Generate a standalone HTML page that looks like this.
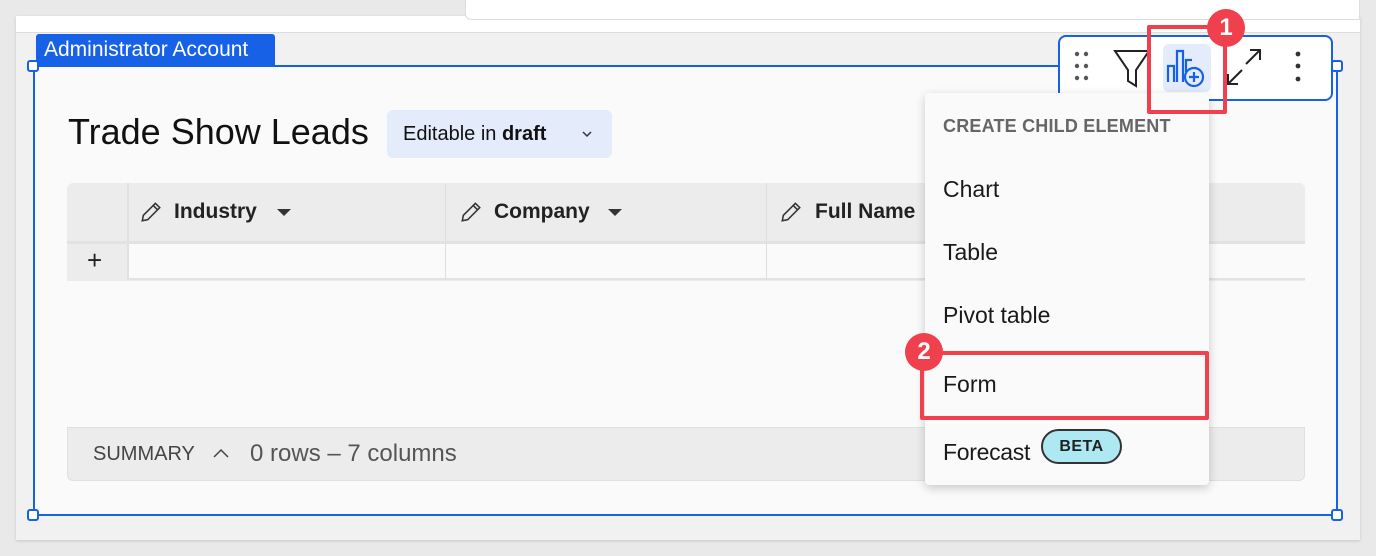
<!DOCTYPE html>
<html><head><meta charset="utf-8"><style>
*{box-sizing:border-box;margin:0;padding:0}
body{width:1376px;height:556px;background:#e9e9e9;font-family:"Liberation Sans",sans-serif;position:relative;overflow:hidden;color:#1a1a1a}
.a{position:absolute}
</style></head><body>
<div class="a" style="left:16px;top:16px;width:1344px;height:524px;background:#f1f1f1;box-shadow:0 1px 3px rgba(0,0,0,.15)"></div>
<div class="a" style="left:16px;top:16px;width:1344px;height:17px;background:#fff;border-bottom:1px solid #ddd"></div>
<div class="a" style="left:465px;top:0;width:895px;height:20px;border:1px solid #ddd;border-top:none;border-radius:0 0 0 6px;background:#fff"></div>
<!-- element -->
<div class="a" style="left:33px;top:65px;width:1305px;height:451px;background:#fafafa;border:2px solid #1761e6"></div>
<div class="a" style="left:36px;top:34px;width:239px;height:31px;background:#1761e6;border-radius:3px 3px 0 0;color:#fff;font-size:21px;line-height:31px;padding-left:8px">Administrator Account</div>
<div class="a" style="left:27px;top:60px;width:12px;height:12px;border:2px solid #1761e6;background:#fff;border-radius:3px"></div>
<div class="a" style="left:1331px;top:60px;width:12px;height:12px;border:2px solid #1761e6;background:#fff;border-radius:3px"></div>
<div class="a" style="left:27px;top:509px;width:12px;height:12px;border:2px solid #1761e6;background:#fff;border-radius:3px"></div>
<div class="a" style="left:1331px;top:509px;width:12px;height:12px;border:2px solid #1761e6;background:#fff;border-radius:3px"></div>
<div class="a" style="left:68px;top:111px;font-size:36px;color:#111">Trade Show Leads</div>
<div class="a" style="left:387px;top:110px;width:225px;height:48px;background:#e4ebfa;border-radius:6px;font-size:20px;line-height:48px;padding-left:16px;color:#111">Editable in <b>draft</b><svg style="position:absolute;left:194px;top:19px" width="12" height="10" viewBox="0 0 12 10"><path d="M2 3l4 4 4-4" fill="none" stroke="#333" stroke-width="1.5"/></svg></div>
<!-- table -->
<div class="a" style="left:67px;top:183px;width:1238px;height:98px;border-radius:6px 6px 0 0;background:#ececec;overflow:hidden">
<div class="a" style="left:60px;top:0;width:1178px;height:58px;background:#ececec;border-left:2px solid #e0e0e0"></div>
<div class="a" style="left:0;top:58px;width:1238px;height:3px;background:#e2e2e2"></div>
<div class="a" style="left:60px;top:61px;width:1178px;height:36px;background:#fafafa;border-left:2px solid #e0e0e0;border-bottom:2px solid #e2e2e2"></div>
<div class="a" style="left:378px;top:0;width:1px;height:97px;background:#dedede"></div>
<div class="a" style="left:699px;top:0;width:1px;height:97px;background:#dedede"></div>
<div class="a" style="left:20px;top:62px;font-size:26px;color:#222">+</div>
</div>
<svg class="a" style="left:139px;top:200px" width="24" height="24" viewBox="0 0 22 22"><path d="M3 19l1-5L15 3l4 4L8 18z M13 5l4 4" fill="none" stroke="#333" stroke-width="1.4"/></svg>
<div class="a" style="left:174px;top:200px;font-size:21px;font-weight:bold;color:#222">Industry</div>
<svg class="a" style="left:277px;top:209px" width="14" height="8"><path d="M0 0h14L7 7z" fill="#333"/></svg>
<svg class="a" style="left:459px;top:200px" width="24" height="24" viewBox="0 0 22 22"><path d="M3 19l1-5L15 3l4 4L8 18z M13 5l4 4" fill="none" stroke="#333" stroke-width="1.4"/></svg>
<div class="a" style="left:494px;top:200px;font-size:21px;font-weight:bold;color:#222">Company</div>
<svg class="a" style="left:608px;top:209px" width="14" height="8"><path d="M0 0h14L7 7z" fill="#333"/></svg>
<svg class="a" style="left:779px;top:200px" width="24" height="24" viewBox="0 0 22 22"><path d="M3 19l1-5L15 3l4 4L8 18z M13 5l4 4" fill="none" stroke="#333" stroke-width="1.4"/></svg>
<div class="a" style="left:815px;top:200px;font-size:21px;font-weight:bold;color:#222">Full Name</div>
<!-- summary -->
<div class="a" style="left:67px;top:427px;width:1238px;height:54px;background:#ececec;border:1px solid #e0e0e0;border-radius:0 0 6px 6px"></div>
<div class="a" style="left:93px;top:443px;font-size:20px;color:#444">SUMMARY</div>
<svg class="a" style="left:212px;top:447px" width="18" height="12"><path d="M2 10l7-7 7 7" fill="none" stroke="#444" stroke-width="1.5"/></svg>
<div class="a" style="left:250px;top:440px;font-size:24px;color:#555">0 rows – 7 columns</div>
<!-- toolbar -->
<div class="a" style="left:1058px;top:35px;width:275px;height:66px;background:#fff;border:2px solid #1761e6;border-radius:8px"></div>
<svg class="a" style="left:1072px;top:48px" width="20" height="36"><g fill="#555"><circle cx="5" cy="6" r="2.2"/><circle cx="14" cy="6" r="2.2"/><circle cx="5" cy="18" r="2.2"/><circle cx="14" cy="18" r="2.2"/><circle cx="5" cy="30" r="2.2"/><circle cx="14" cy="30" r="2.2"/></g></svg>
<svg class="a" style="left:1112px;top:48px" width="40" height="40"><path d="M3 3h34L24 22v16l-8-5V22z" fill="none" stroke="#222" stroke-width="2"/></svg>
<div class="a" style="left:1163px;top:44px;width:48px;height:48px;background:#e4ebfa;border-radius:6px"></div>
<svg class="a" style="left:1163px;top:44px" width="48" height="48"><g fill="none" stroke="#1761e6" stroke-width="2.2"><path d="M5 38V22h6v16 M14 38V7h6v31 M23 28V16h6"/><circle cx="31" cy="33" r="9" fill="#e4ebfa"/><path d="M31 28v10M26 33h10"/></g></svg>
<svg class="a" style="left:1226px;top:48px" width="36" height="38"><g fill="none" stroke="#222" stroke-width="2"><path d="M20 16L34 2M24 2h10v10 M16 22L2 36M2 26v10h10"/></g></svg>
<svg class="a" style="left:1290px;top:48px" width="16" height="36"><g fill="#333"><circle cx="8" cy="6" r="2.4"/><circle cx="8" cy="18" r="2.4"/><circle cx="8" cy="31" r="2.4"/></g></svg>
<!-- menu -->
<div class="a" style="left:925px;top:93px;width:284px;height:392px;background:#fafafa;border-radius:4px;box-shadow:0 3px 10px rgba(0,0,0,.2)"></div>
<div class="a" style="left:943px;top:116px;font-size:18px;font-weight:bold;color:#666;letter-spacing:0.2px">CREATE CHILD ELEMENT</div>
<div class="a" style="left:943px;top:176px;font-size:23px;color:#1a1a1a">Chart</div>
<div class="a" style="left:943px;top:239px;font-size:23px;color:#1a1a1a">Table</div>
<div class="a" style="left:943px;top:302px;font-size:23px;color:#1a1a1a">Pivot table</div>
<div class="a" style="left:943px;top:371px;font-size:23px;color:#1a1a1a">Form</div>
<div class="a" style="left:943px;top:439px;font-size:23px;color:#1a1a1a;letter-spacing:-0.3px">Forecast</div>
<div class="a" style="left:1041px;top:429px;width:81px;height:35px;background:#aee8f2;border:2px solid #333;border-radius:18px;font-size:16px;font-weight:bold;color:#222;text-align:center;line-height:31px;letter-spacing:0.5px">BETA</div>
<!-- red box 1 -->
<div class="a" style="left:1147px;top:25px;width:80px;height:89px;border:4px solid #f0404e;border-radius:2px"></div>
<div class="a" style="left:1207px;top:9px;width:38px;height:38px;background:#f0404e;border-radius:50%;color:#fff;font-weight:bold;font-size:24px;text-align:center;line-height:38px">1</div>
<div class="a" style="left:920px;top:351px;width:289px;height:69px;border:4px solid #f0404e;border-radius:2px"></div>
<div class="a" style="left:905px;top:333px;width:38px;height:38px;background:#f0404e;border-radius:50%;color:#fff;font-weight:bold;font-size:24px;text-align:center;line-height:38px">2</div>
</body></html>
